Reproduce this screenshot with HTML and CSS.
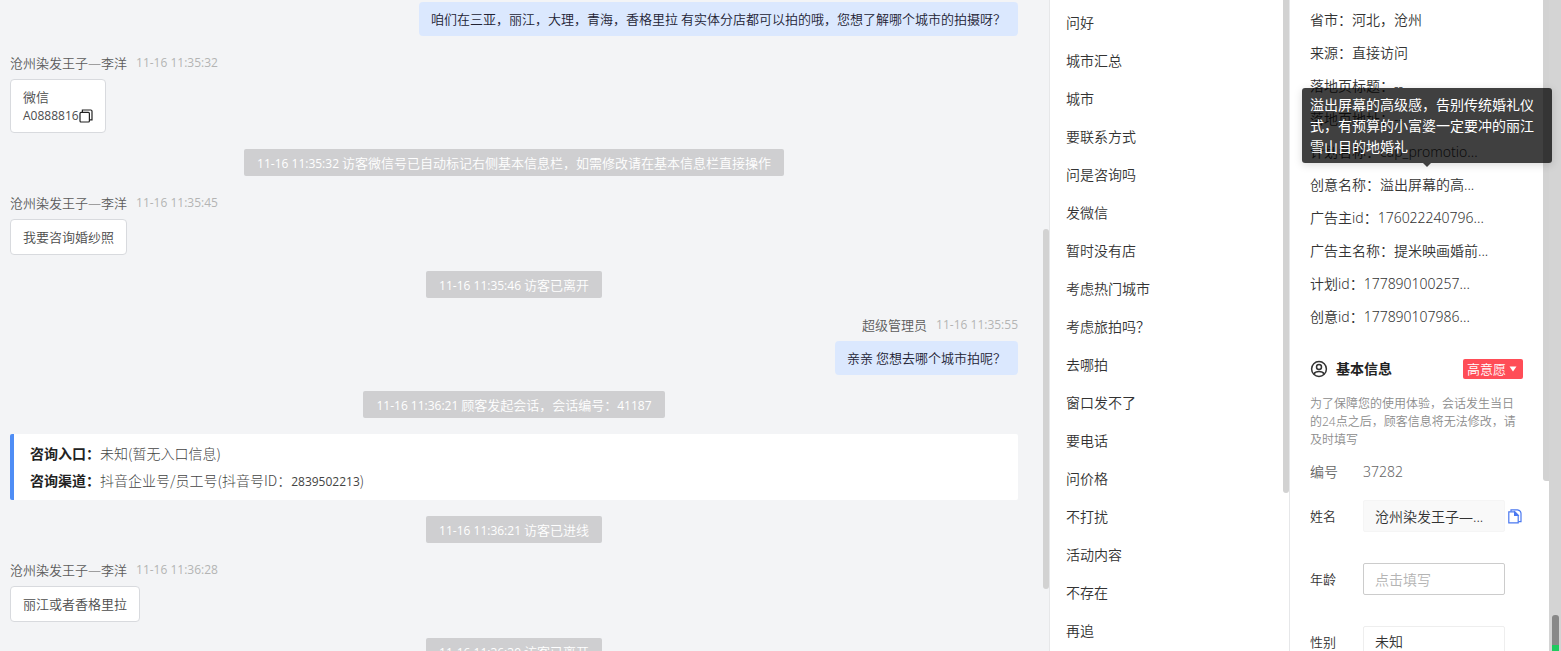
FILE: index.html
```html
<!DOCTYPE html>
<html lang="zh-CN">
<head>
<meta charset="utf-8">
<title>会话</title>
<link rel="stylesheet" href="styles.css">
</head>
<body>
<div class="app">
  <main class="chat">
    <div class="bubble bubble-out">咱们在三亚，丽江，大理，青海，香格里拉 有实体分店都可以拍的哦，您想了解哪个城市的拍摄呀？</div>

    <div class="message">
      <div class="meta"><span class="name">沧州染发王子—李洋</span><time class="num">11-16 11:35:32</time></div>
      <div class="bubble bubble-in contact">
        <span>微信</span>
        <span class="contact-id"><span class="num">A0888816</span><button class="icon-button" aria-label="复制微信号"><svg width="14" height="14" viewBox="0 0 14 14" fill="none" stroke="#222" stroke-width="1.2"><rect x="1" y="3.4" width="9.4" height="9.6" rx="1"/><path d="M3.4 3.2V1h8.4q1.2 0 1.2 1.2v8.6h-2.4"/></svg></button></span>
      </div>
    </div>

    <div class="notice"><span class="num">11-16 11:35:32</span> 访客微信号已自动标记右侧基本信息栏，如需修改请在基本信息栏直接操作</div>

    <div class="message">
      <div class="meta"><span class="name">沧州染发王子—李洋</span><time class="num">11-16 11:35:45</time></div>
      <div class="bubble bubble-in">我要咨询婚纱照</div>
    </div>

    <div class="notice"><span class="num">11-16 11:35:46</span> 访客已离开</div>

    <div class="message message-out">
      <div class="meta"><span class="name">超级管理员</span><time class="num">11-16 11:35:55</time></div>
      <div class="bubble bubble-out">亲亲 您想去哪个城市拍呢？</div>
    </div>

    <div class="notice"><span class="num">11-16 11:36:21</span> 顾客发起会话，会话编号：<span class="num">41187</span></div>

    <div class="entry-card">
      <div><b>咨询入口：</b>未知(暂无入口信息)</div>
      <div><b>咨询渠道：</b>抖音企业号/员工号(抖音号ID：<span class="num">2839502213</span>)</div>
    </div>

    <div class="notice"><span class="num">11-16 11:36:21</span> 访客已进线</div>

    <div class="message">
      <div class="meta"><span class="name">沧州染发王子—李洋</span><time class="num">11-16 11:36:28</time></div>
      <div class="bubble bubble-in">丽江或者香格里拉</div>
    </div>

    <div class="notice"><span class="num">11-16 11:36:39</span> 访客已离开</div>
    <div class="thumb thumb-chat"></div>
  </main>

  <aside class="replies">
    <ul class="reply-list">
      <li>问好</li><li>城市汇总</li><li>城市</li><li>要联系方式</li><li>问是咨询吗</li><li>发微信</li><li>暂时没有店</li><li>考虑热门城市</li><li>考虑旅拍吗？</li><li>去哪拍</li><li>窗口发不了</li><li>要电话</li><li>问价格</li><li>不打扰</li><li>活动内容</li><li>不存在</li><li>再追</li>
    </ul>
    <div class="thumb thumb-replies"></div>
  </aside>

  <aside class="details">
    <ul class="facts">
      <li>省市：河北，沧州</li>
      <li>来源：直接访问</li>
      <li>落地页标题：--</li>
      <li>落地页地址：--</li>
      <li>计划名称：cap_promotio...</li>
      <li class="has-tip">创意名称：溢出屏幕的高...
        <div class="tooltip" role="tooltip">溢出屏幕的高级感，告别传统婚礼仪式，有预算的小富婆一定要冲的丽江雪山目的地婚礼</div>
      </li>
      <li>广告主id：176022240796...</li>
      <li>广告主名称：提米映画婚前...</li>
      <li>计划id：177890100257...</li>
      <li>创意id：177890107986...</li>
    </ul>

    <div class="section-head">
      <svg width="18" height="18" viewBox="0 0 18 18" fill="none" stroke="#333" stroke-width="1.5"><circle cx="9" cy="9" r="7.4"/><circle cx="9" cy="7" r="2.5"/><path d="M3.8 14q1.4-2.4 5.2-2.4t5.2 2.4"/></svg>
      <h2>基本信息</h2>
      <button class="intent">高意愿<svg width="8" height="6" viewBox="0 0 8 6"><path d="M.5 .5h7L4 5.5z" fill="#fff"/></svg></button>
    </div>
    <p class="hint">为了保障您的使用体验，会话发生当日的24点之后，顾客信息将无法修改，请及时填写</p>
    <div class="record"><span>编号</span><span>37282</span></div>

    <form class="form">
      <label for="name">姓名</label>
      <input id="name" class="field field-filled" value="沧州染发王子—..." readonly>
      <button type="button" class="icon-button" aria-label="复制姓名"><svg width="14" height="15" viewBox="0 0 14 15" fill="none" stroke="#4a78f0" stroke-width="1.2"><path d="M.8 2.8h6l3.4 3.4v7.6H.8z"/><path d="M6.6 3v3.4h3.4z" fill="#4a78f0"/><path d="M3 2.6V.8h6.4Q13 1.4 13 4.6v8h-2.6"/></svg></button>
      <label for="age">年龄</label>
      <input id="age" class="field" placeholder="点击填写">
      <label for="gender">性别</label>
      <select id="gender" class="field field-select"><option>未知</option></select>
    </form>
    <div class="thumb thumb-details"></div>
  </aside>

  <div class="track"><div class="track-thumb"></div></div>
</div>
</body>
</html>
```
FILE: styles.css
```css
* { box-sizing: border-box; }

body {
  margin: 0;
  font: 14px/20px "Noto Sans", "Noto Sans CJK SC", sans-serif;
  font-weight: 350;
  color: #333;
}

ul { list-style: none; margin: 0; padding: 0; }

button { border: 0; padding: 0; background: none; font: inherit; cursor: pointer; }

svg { flex-shrink: 0; }

.app {
  display: flex;
  height: 100vh;
  overflow: hidden;
}

.thumb {
  position: absolute;
  right: 0;
  width: 6px;
  background: #d2d2d2;
}

/* Conversation */
.chat {
  position: relative;
  flex: 1;
  min-width: 0;
  display: flex;
  flex-direction: column;
  align-items: flex-start;
  gap: 16px;
  padding: 2px 31px 0 10px;
  overflow: hidden;
  background: #f3f4f6;
  font-family: "Noto Sans CJK SC", sans-serif;
  font-size: 13px;
}

.chat > * { flex-shrink: 0; }

.thumb-chat { top: 229px; height: 360px; border-radius: 3px; }

.name { font-family: "Open Sans", "Noto Sans CJK SC", sans-serif; }

.num { font-family: "Open Sans", sans-serif; font-size: 12px; font-weight: 400; }

.message {
  display: flex;
  flex-direction: column;
  align-items: flex-start;
  gap: 5px;
}

.message-out { align-self: flex-end; align-items: flex-end; }

.meta { display: flex; gap: 9px; height: 22px; line-height: 22px; color: #5c5c5c; }
.meta .num { color: #b4b4b4; }

.bubble { padding: 7px 12px; border-radius: 4px; }
.bubble-in { border: 1px solid #d8dade; background: #fff; color: #4c4c4c; }
.bubble-out { align-self: flex-end; background: #dbe8fe; color: #223; }

.contact { display: flex; flex-direction: column; line-height: 19px; }
.contact-id { display: flex; align-items: center; }
.icon-button { display: flex; align-items: center; }

.notice {
  align-self: center;
  padding: 0 13px;
  border-radius: 2px;
  line-height: 27px;
  background: #cfcfd1;
  color: #fff;
}
.notice .num { line-height: 1; }

.entry-card {
  align-self: stretch;
  padding: 6px 16px;
  border-left: 4px solid #4f8df5;
  border-radius: 2px;
  background: #fff;
  font-size: 14px;
  font-weight: 300;
  line-height: 27px;
  color: #444;
}
.entry-card b { font-weight: 700; color: #222; }
.entry-card .num { line-height: 1; }

/* Quick replies */
.replies {
  position: relative;
  flex: 0 0 240px;
  padding: 4px 16px 0;
  border-left: 1px solid #e6e7e9;
  background: #fff;
}
.reply-list { line-height: 38px; }
.thumb-replies { top: 0; height: 493px; border-radius: 0 0 3px 3px; }

/* Visitor details */
.details {
  position: relative;
  flex: 0 0 260px;
  padding: 3px 26px 0 20px;
  border-left: 1px solid #e6e7e9;
  background: #fff;
}
.facts { line-height: 33px; white-space: nowrap; }
.thumb-details { top: 0; height: 481px; border-radius: 0 0 0 3px; }

.has-tip { position: relative; }
.tooltip {
  position: absolute;
  z-index: 2;
  left: -8px;
  bottom: 38px;
  width: 250px;
  padding: 6px 8px;
  border-radius: 3px;
  background: rgba(0, 0, 0, 0.75);
  box-shadow: 0 2px 8px rgba(0, 0, 0, 0.15);
  font-weight: 400;
  line-height: 21px;
  white-space: normal;
  color: #fff;
}
.tooltip::after {
  content: "";
  position: absolute;
  top: 100%;
  left: 50%;
  margin-left: -4px;
  border: 4px solid transparent;
  border-top-color: #404040;
  border-bottom: 0;
}

.section-head {
  display: flex;
  align-items: center;
  gap: 8px;
  margin-top: 26px;
}
.section-head h2 { margin: 0; font-size: 14px; font-weight: 600; color: #222; }
.intent {
  display: flex;
  align-items: center;
  gap: 3px;
  padding: 0 6px 0 4px;
  margin-left: auto;
  border-radius: 2px;
  background: #ff4d57;
  font-size: 13px;
  color: #fff;
}

.hint {
  margin: 16px 0 0;
  font-size: 12px;
  line-height: 18px;
  color: #8c8c8c;
}

.record {
  display: grid;
  grid-template-columns: 53px 1fr;
  margin-top: 13px;
  color: #666;
}

.form {
  display: grid;
  grid-template-columns: 53px 142px 17px;
  align-items: center;
  row-gap: 31px;
  margin-top: 18px;
}
.form label { font-size: 13px; grid-column: 1; }
.form .icon-button { justify-content: flex-end; }

.field {
  width: 100%;
  height: 32px;
  padding: 0 11px;
  border: 1px solid #ccc;
  border-radius: 2px;
  background: #fff;
  font: inherit;
  color: #333;
}
.field::placeholder { color: #b4b4b4; }
.field-filled { border-color: #f5f5f5; background: #f9f9f9; }
.field-select { appearance: none; border-color: #eee; }

/* Window scrollbar */
.track {
  flex: 0 0 12px;
  display: flex;
  flex-direction: column;
  align-items: center;
  justify-content: flex-end;
  background: #d4d4d4;
}
.track-thumb {
  width: 7px;
  height: 36px;
  border-radius: 3px 3px 0 0;
  background: linear-gradient(#888 30px, #1fcb5f 30px);
}
```
